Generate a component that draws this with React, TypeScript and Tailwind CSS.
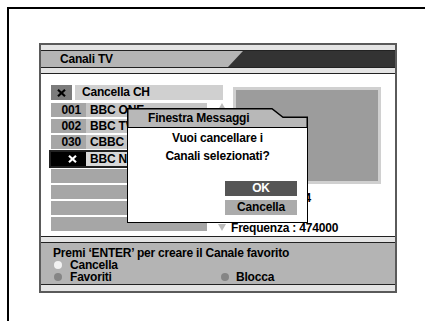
const font = { fontFamily: '"Liberation Sans", Arial, sans-serif' };

const channels = [
  { num: "001", name: "BBC ONE" },
  { num: "002", name: "BBC TWO" },
  { num: "030", name: "CBBC" },
];

function Cross({ className = "" }: { className?: string }) {
  return (
    <svg viewBox="0 0 9 8" className={className} aria-hidden>
      <path d="M1 0.8 8 7.2M8 0.8 1 7.2" stroke="currentColor" strokeWidth="2.2" fill="none" />
    </svg>
  );
}

function Strip({ h }: { h: string }) {
  return <div className={`${h} bg-[#e4e4e4] border-b border-[#222]`} />;
}

export default function App() {
  return (
    <div
      className="w-[425px] h-[321px] overflow-hidden bg-white pt-[7px] pl-[7px] text-[12px] font-bold tracking-[-0.2px] text-black"
      style={font}
    >
      <div className="w-[440px] h-[330px] border-l-2 border-t-2 border-black pt-[34px] pl-[30px]">
        {/* TV screen panel */}
        <div className="w-[358px] h-[250px] border-2 border-[#5a5a5a] flex flex-col">
          <Strip h="h-[6px]" />
          {/* title bar */}
          <div className="h-[17px] flex bg-[#b5b5b5] border-b border-[#222]">
            <div className="w-[187px] pl-[19px] leading-[16px]">Canali TV</div>
            <div className="flex-1 bg-[#333] [clip-path:polygon(15px_0,100%_0,100%_100%,0_100%)]" />
          </div>
          <Strip h="h-[6px]" />

          {/* main content */}
          <div className="relative h-[163px] bg-white border-b border-[#222] flex pl-[10px] pt-[11px]">
            {/* channel list */}
            <div className="w-[156px] flex flex-col">
              <div className="w-[172px] h-[15px] flex">
                <div className="w-[21px] bg-[#7c7c7c] flex items-center justify-center">
                  <Cross className="w-[9px] h-[8px] text-black" />
                </div>
                <div className="ml-[3px] flex-1 bg-[#d0d0d0] pl-[7px] leading-[15px]">Cancella CH</div>
              </div>
              <div className="mt-[3px] flex flex-col gap-[2px]">
                {channels.map((c) => (
                  <div key={c.num} className="h-[14px] flex leading-[14px]">
                    <div className="w-[35px] bg-[#a6a6a6] text-right pr-[5px]">{c.num}</div>
                    <div className="flex-1 bg-[#c6c6c6] pl-[4px] whitespace-nowrap overflow-hidden">{c.name}</div>
                  </div>
                ))}
              </div>
              <div className="mt-[1px] ml-[-2px] w-[160px] h-[18px] border-2 border-[#222] flex leading-[14px]">
                <div className="w-[35px] bg-black flex items-center justify-end pr-[9px]">
                  <Cross className="w-[9px] h-[8px] text-white" />
                </div>
                <div className="flex-1 bg-[#d8d8d8] pl-[4px] whitespace-nowrap overflow-hidden">BBC NEWS 24</div>
              </div>
              <div className="mt-[1px] flex flex-col gap-[2px]">
                {[0, 1, 2, 3].map((i) => (
                  <div key={i} className="h-[14px] bg-[#a6a6a6]" />
                ))}
              </div>
            </div>

            {/* scroll arrows */}
            <div className="w-[24px] flex flex-col items-center justify-between pt-[18px] pb-[5px] pl-[5px]">
              <svg viewBox="0 0 8 7" className="w-[8px] h-[7px]" aria-hidden>
                <path d="M4 0 8 7H0Z" fill="#bcbcbc" />
              </svg>
              <svg viewBox="0 0 8 7" className="w-[8px] h-[7px]" aria-hidden>
                <path d="M0 0H8L4 7Z" fill="#bcbcbc" />
              </svg>
            </div>

            {/* preview + info */}
            <div className="flex flex-col">
              <div className="ml-[2px] mt-[2px] w-[148px] h-[97px] border-[3px] border-[#d0d0d0] bg-[#9c9c9c]" />
              <div className="mt-[7px] leading-[14px] whitespace-nowrap">Canale RF : 24</div>
              <div className="mt-[16px] leading-[14px] whitespace-nowrap">Frequenza : 474000</div>
            </div>

            {/* message window */}
            <div className="absolute left-[86px] top-[34px] w-[181px]">
              <div className="relative h-[19px]">
                <svg viewBox="0 0 181 19" className="absolute inset-0 w-full h-full" aria-hidden>
                  <path
                    d="M0.75 19V0.75H145L156 9.25H180.25V19"
                    fill="#b8b8b8"
                    stroke="#000"
                    strokeWidth="1.5"
                  />
                </svg>
                <div className="relative pl-[21px] pt-[3px] leading-[14px]">Finestra Messaggi</div>
              </div>
              <div className="h-[96px] bg-white border-[1.5px] border-black flex flex-col items-center">
                <div className="mt-[1px] leading-[18px]">Vuoi cancellare i</div>
                <div className="leading-[18px]">Canali selezionati?</div>
                <div className="mt-[16px] self-end mr-[10px] flex flex-col gap-[4px]">
                  <div className="w-[72px] h-[15px] bg-[#555] text-white text-center leading-[15px]">OK</div>
                  <div className="w-[72px] h-[15px] bg-[#ababab] text-center leading-[15px]">Cancella</div>
                </div>
              </div>
            </div>
          </div>

          <Strip h="h-[6px]" />
          {/* help bar */}
          <div className="h-[42px] bg-[#b4b4b4] border-b border-[#222] pl-[12px] pt-[4px] leading-[12px]">
            <div>Premi ‘ENTER’ per creare il Canale favorito</div>
            <div className="flex items-center">
              <span className="ml-[1px] w-[8px] h-[8px] rounded-full bg-[#f2f2f2]" />
              <span className="ml-[8px]">Cancella</span>
            </div>
            <div className="flex items-center">
              <div className="w-[168px] flex items-center">
                <span className="ml-[1px] w-[8px] h-[8px] rounded-full bg-[#858585]" />
                <span className="ml-[8px]">Favoriti</span>
              </div>
              <span className="w-[8px] h-[8px] rounded-full bg-[#858585]" />
              <span className="ml-[7px]">Blocca</span>
            </div>
          </div>
          <div className="flex-1 bg-[#e4e4e4]" />
        </div>
      </div>
    </div>
  );
}
